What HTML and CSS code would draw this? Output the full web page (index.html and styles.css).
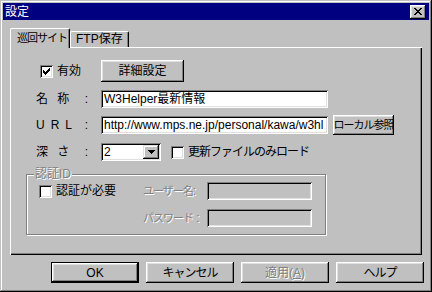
FILE: index.html
```html
<!DOCTYPE html>
<html lang="ja">
<head>
    <meta charset="UTF-8">
    <title>設定</title>
    <link rel="stylesheet" href="styles.css">
</head>
<body>
    <div class="window">
        <div class="titlebar">
            <span class="title">設定</span>
            <span class="close-btn">
                <svg width="8" height="7" viewBox="0 0 8 7" shape-rendering="crispEdges">
                    <path d="M0 0h2v1h1v1h2v-1h1v-1h2v1h-1v1h-1v1h-1v1h1v1h1v1h1v1h-2v-1h-1v-1h-2v1h-1v1h-2v-1h1v-1h1v-1h1v-1h-1v-1h-1v-1h-1z" fill="#000"/>
                </svg>
            </span>
        </div>

        <div class="tabstrip">
            <div class="tab tab-active"><span class="kana-small">巡回サイト</span></div>
            <div class="tab">FTP保存</div>
        </div>

        <div class="panel">
            <div class="row row-enable">
                <div class="cell-label">
                    <span class="check">
                        <svg width="7" height="7" viewBox="0 0 7 7" shape-rendering="crispEdges">
                            <path d="M6 0h1v3h-1v1h-1v1h-1v1h-1v1h-1v-1h-1v-1h-1v-3h1v1h1v1h1v-1h1v-1h1z" fill="#000"/>
                        </svg>
                    </span>
                    <span>有効</span>
                </div>
                <button class="btn btn-detail">詳細設定</button>
            </div>

            <div class="row row-name">
                <div class="cell-label"><span class="spaced-jp">名 称</span><span>:</span></div>
                <div class="input input-wide">W3Helper最新情報</div>
            </div>

            <div class="row row-url">
                <div class="cell-label"><span class="spaced-en">URL</span><span>:</span></div>
                <div class="input input-wide">http://www.mps.ne.jp/personal/kawa/w3hl</div>
                <button class="btn btn-local"><span class="kana-small">ローカル参照</span></button>
            </div>

            <div class="row row-depth">
                <div class="cell-label"><span class="spaced-jp">深 さ</span><span>:</span></div>
                <div class="select">
                    <span class="select-value">2</span>
                    <span class="select-arrow">
                        <svg width="7" height="4" viewBox="0 0 7 4" shape-rendering="crispEdges">
                            <path d="M0 0h7v1h-1v1h-1v1h-1v1h-1v-1h-1v-1h-1v-1h-1z" fill="#000"/>
                        </svg>
                    </span>
                </div>
                <span class="check check-empty"></span>
                <span class="kana">更新ファイルのみロード</span>
            </div>

            <div class="group">
                <span class="legend disabled">認証ID</span>
                <div class="group-row">
                    <div class="group-cell">
                        <span class="check check-empty"></span>
                        <span>認証が必要</span>
                    </div>
                    <span class="group-label disabled"><span class="kana-small">ユーザー名</span>:</span>
                    <div class="input input-small input-disabled"></div>
                </div>
                <div class="group-row group-row-pass">
                    <div class="group-cell"></div>
                    <span class="group-label disabled"><span class="kana-small">パスワード</span> :</span>
                    <div class="input input-small input-disabled"></div>
                </div>
            </div>
        </div>

        <div class="buttons">
            <button class="btn btn-dialog btn-default">OK</button>
            <button class="btn btn-dialog"><span class="kana">キャンセル</span></button>
            <button class="btn btn-dialog disabled">適用(<u>A</u>)</button>
            <button class="btn btn-dialog"><span class="kana">ヘルプ</span></button>
        </div>
    </div>
</body>
</html>
```

FILE: styles.css
```css
body {
    margin: 0;
    font-family: "Liberation Sans", "Noto Sans CJK JP", sans-serif;
    font-size: 12px;
    line-height: 14px;
    color: #000;
    background: #c0c0c0;
}
.window {
    width: 432px;
    height: 292px;
    box-sizing: border-box;
    padding: 3px;
    background: #c0c0c0;
    box-shadow: inset -1px -1px #000, inset 1px 1px #c0c0c0, inset -2px -2px #808080, inset 2px 2px #fff;
}
.titlebar {
    height: 17px;
    display: flex;
    align-items: center;
    justify-content: space-between;
    background: #000080;
    color: #fff;
    padding: 0 3px 0 2px;
}
.close-btn {
    width: 16px;
    height: 14px;
    box-sizing: border-box;
    display: flex;
    align-items: center;
    justify-content: center;
    padding: 0 1px 1px 0;
    background: #c0c0c0;
    box-shadow: inset -1px -1px #000, inset 1px 1px #fff, inset -2px -2px #808080, inset 2px 2px #dfdfdf;
}
.kana {
    letter-spacing: -1px;
    white-space: nowrap;
}
.kana-small {
    font-size: 11px;
    letter-spacing: -1px;
    white-space: nowrap;
}
.tabstrip {
    height: 27px;
    display: flex;
    align-items: flex-end;
    padding-left: 7px;
}
.tab {
    height: 16px;
    box-sizing: border-box;
    padding: 0 5px;
    line-height: 15px;
    white-space: nowrap;
    border-top: 1px solid #fff;
    border-left: 1px solid #fff;
    border-right: 1px solid #000;
    border-radius: 2px 2px 0 0;
    box-shadow: inset -1px 0 #808080;
}
.tab-active {
    position: relative;
    z-index: 1;
    height: 20px;
    width: 60px;
    margin-bottom: -1px;
    padding: 2px 0 0 6px;
    background: #c0c0c0;
}
.panel {
    height: 208px;
    box-sizing: border-box;
    margin: 0 7px;
    padding: 13px 0 0 16px;
    box-shadow: inset 1px 1px #fff, inset -1px -1px #000, inset -2px -2px #808080;
}
.row {
    display: flex;
    align-items: center;
    padding-left: 10px;
}
.cell-label {
    width: 65px;
    box-sizing: border-box;
    padding-right: 13px;
    display: flex;
    align-items: center;
    justify-content: space-between;
}
.row-enable {
    height: 22px;
}
.row-enable .cell-label {
    justify-content: flex-start;
    padding-left: 4px;
}
.row-name {
    height: 18px;
    margin-top: 8px;
}
.row-url {
    height: 20px;
    margin-top: 7px;
}
.row-depth {
    height: 18px;
    margin-top: 8px;
}
.spaced-jp {
    letter-spacing: 3px;
}
.spaced-en {
    letter-spacing: 6px;
}
.check {
    width: 13px;
    height: 13px;
    box-sizing: border-box;
    flex: none;
    display: flex;
    align-items: center;
    justify-content: center;
    margin-right: 4px;
    background: #fff;
    box-shadow: inset 1px 1px #808080, inset -1px -1px #fff, inset 2px 2px #000, inset -2px -2px #dfdfdf;
}
.btn {
    font-family: inherit;
    font-size: 12px;
    line-height: 14px;
    color: #000;
    padding: 0;
    border: none;
    white-space: nowrap;
    background: #c0c0c0;
    box-shadow: inset -1px -1px #000, inset 1px 1px #fff, inset -2px -2px #808080, inset 2px 2px #dfdfdf;
}
.btn-detail {
    width: 83px;
    height: 22px;
}
.btn-local {
    width: 61px;
    height: 20px;
    margin-left: 5px;
}
.input {
    height: 18px;
    box-sizing: border-box;
    padding: 2px 3px 0;
    overflow: hidden;
    white-space: nowrap;
    background: #fff;
    box-shadow: inset 1px 1px #808080, inset -1px -1px #fff, inset 2px 2px #000, inset -2px -2px #dfdfdf;
}
.input-wide {
    width: 227px;
}
.select {
    width: 60px;
    height: 18px;
    box-sizing: border-box;
    padding: 2px;
    display: flex;
    justify-content: space-between;
    background: #fff;
    box-shadow: inset 1px 1px #808080, inset -1px -1px #fff, inset 2px 2px #000, inset -2px -2px #dfdfdf;
}
.select-value {
    padding-left: 1px;
}
.select-arrow {
    width: 16px;
    height: 14px;
    display: flex;
    align-items: center;
    justify-content: center;
    background: #c0c0c0;
    box-shadow: inset -1px -1px #000, inset 1px 1px #dfdfdf, inset -2px -2px #808080, inset 2px 2px #fff;
}
.row-depth .check {
    margin-left: 10px;
}
.group {
    width: 300px;
    height: 61px;
    box-sizing: border-box;
    margin-top: 13px;
    border: 1px solid #808080;
    box-shadow: inset 1px 1px #fff, 1px 1px #fff;
}
.legend {
    display: table;
    height: 14px;
    margin: -8px 0 0 7px;
    padding: 0 1px;
    background: #c0c0c0;
}
.disabled {
    color: #808080;
    text-shadow: 1px 1px 0 #fff;
}
.group-row {
    display: flex;
    align-items: center;
    height: 18px;
    margin-top: 1px;
    padding-left: 12px;
}
.group-row-pass {
    height: 19px;
    margin-top: 8px;
}
.group-cell {
    width: 104px;
    display: flex;
    align-items: center;
}
.group-label {
    width: 64px;
    white-space: nowrap;
}
.input-small {
    width: 105px;
}
.input-disabled {
    background: #c0c0c0;
}
.buttons {
    display: flex;
    gap: 7px;
    margin-top: 7px;
    padding-left: 48px;
}
.btn-dialog {
    width: 88px;
    height: 21px;
}
.btn-default {
    border: 1px solid #000;
}
```
